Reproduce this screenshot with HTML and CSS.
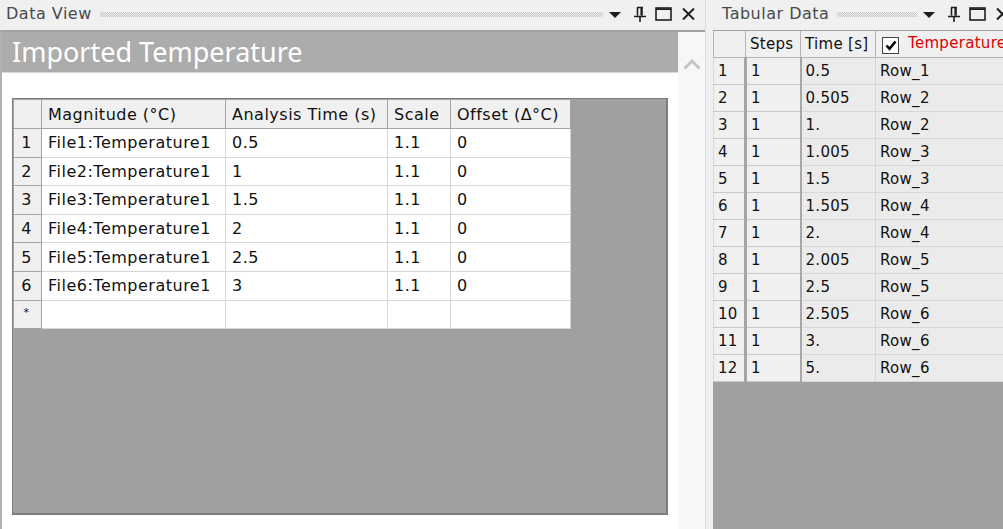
FILE: index.html
```html
<!DOCTYPE html>
<html lang="en">
<head>
    <meta charset="UTF-8">
    <title>Data View</title>
    <link rel="stylesheet" href="styles.css">
</head>
<body>

<div class="app">

    <!-- Data View pane -->
    <section class="pane pane-left">
        <header class="pane-title">
            <span class="pane-name">Data View</span>
            <span class="grip"></span>
            <span class="pane-tools">
                <svg class="ico ico-menu" width="12" height="6" viewBox="0 0 12 6"><path d="M0 0H12L6 6Z" fill="#1e1e1e"/></svg>
                <svg class="ico ico-pin" width="14" height="16" viewBox="0 0 14 16"><path d="M4.5 1.5V9.5M4 1.5H10M9 1.5V9.5M1 10.5H13M7 10.5V16" stroke="#1e1e1e" stroke-width="1.6" fill="none"/><path d="M8.2 1.5V9.5" stroke="#1e1e1e" stroke-width="1.6"/></svg>
                <svg class="ico ico-max" width="17" height="14" viewBox="0 0 17 14"><rect x="1" y="1" width="15" height="12" fill="none" stroke="#1e1e1e" stroke-width="1.6"/><path d="M1 2.2H16" stroke="#1e1e1e" stroke-width="1.6"/></svg>
                <svg class="ico ico-close" width="13" height="12" viewBox="0 0 13 12"><path d="M1 0.5L12 11.5M12 0.5L1 11.5" stroke="#1e1e1e" stroke-width="2"/></svg>
            </span>
        </header>
        <div class="pane-body">
            <div class="view">
                <div class="banner">Imported Temperature</div>
                <div class="view-area">
                    <div class="grid-box">
                        <table class="grid">
                            <colgroup>
                                <col style="width:28px">
                                <col style="width:184px">
                                <col style="width:162px">
                                <col style="width:63px">
                                <col style="width:120px">
                            </colgroup>
                            <tr class="head">
                                <th class="rh"></th>
                                <th>Magnitude (°C)</th>
                                <th>Analysis Time (s)</th>
                                <th>Scale</th>
                                <th>Offset (Δ°C)</th>
                            </tr>
                            <tr><td class="rh">1</td><td>File1:Temperature1</td><td>0.5</td><td>1.1</td><td>0</td></tr>
                            <tr><td class="rh">2</td><td>File2:Temperature1</td><td>1</td><td>1.1</td><td>0</td></tr>
                            <tr><td class="rh">3</td><td>File3:Temperature1</td><td>1.5</td><td>1.1</td><td>0</td></tr>
                            <tr><td class="rh">4</td><td>File4:Temperature1</td><td>2</td><td>1.1</td><td>0</td></tr>
                            <tr><td class="rh">5</td><td>File5:Temperature1</td><td>2.5</td><td>1.1</td><td>0</td></tr>
                            <tr><td class="rh">6</td><td>File6:Temperature1</td><td>3</td><td>1.1</td><td>0</td></tr>
                            <tr><td class="rh star">*</td><td></td><td></td><td></td><td></td></tr>
                        </table>
                    </div>
                </div>
            </div>
            <div class="vscroll">
                <svg width="18" height="12" viewBox="0 0 18 12"><path d="M1.5 10.5L9 3L16.5 10.5" stroke="#c4c4c4" stroke-width="3" fill="none"/></svg>
            </div>
        </div>
    </section>

    <div class="splitter"></div>

    <!-- Tabular Data pane -->
    <section class="pane pane-right">
        <header class="pane-title">
            <span class="pane-name">Tabular Data</span>
            <span class="grip"></span>
            <span class="pane-tools">
                <svg class="ico ico-menu" width="12" height="6" viewBox="0 0 12 6"><path d="M0 0H12L6 6Z" fill="#1e1e1e"/></svg>
                <svg class="ico ico-pin" width="14" height="16" viewBox="0 0 14 16"><path d="M4.5 1.5V9.5M4 1.5H10M9 1.5V9.5M1 10.5H13M7 10.5V16" stroke="#1e1e1e" stroke-width="1.6" fill="none"/><path d="M8.2 1.5V9.5" stroke="#1e1e1e" stroke-width="1.6"/></svg>
                <svg class="ico ico-max" width="17" height="14" viewBox="0 0 17 14"><rect x="1" y="1" width="15" height="12" fill="none" stroke="#1e1e1e" stroke-width="1.6"/><path d="M1 2.2H16" stroke="#1e1e1e" stroke-width="1.6"/></svg>
                <svg class="ico ico-close" width="13" height="12" viewBox="0 0 13 12"><path d="M1 0.5L12 11.5M12 0.5L1 11.5" stroke="#1e1e1e" stroke-width="2"/></svg>
            </span>
        </header>
        <div class="tab-body">
            <table class="tab">
                <colgroup>
                    <col style="width:32px">
                    <col style="width:55px">
                    <col style="width:75px">
                    <col style="width:144px">
                </colgroup>
                <tr class="head">
                    <th class="num"></th>
                    <th class="steps">Steps</th>
                    <th>Time [s]</th>
                    <th class="temp"><span class="check"><svg width="12" height="11" viewBox="0 0 12 11"><path d="M1.5 5.5L4.5 8.8L10.5 1.5" stroke="#000" stroke-width="2.6" fill="none"/></svg></span>Temperature</th>
                </tr>
                <tr><td class="num">1</td><td class="steps">1</td><td>0.5</td><td>Row_1</td></tr>
                <tr><td class="num">2</td><td class="steps">1</td><td>0.505</td><td>Row_2</td></tr>
                <tr><td class="num">3</td><td class="steps">1</td><td>1.</td><td>Row_2</td></tr>
                <tr><td class="num">4</td><td class="steps">1</td><td>1.005</td><td>Row_3</td></tr>
                <tr><td class="num">5</td><td class="steps">1</td><td>1.5</td><td>Row_3</td></tr>
                <tr><td class="num">6</td><td class="steps">1</td><td>1.505</td><td>Row_4</td></tr>
                <tr><td class="num">7</td><td class="steps">1</td><td>2.</td><td>Row_4</td></tr>
                <tr><td class="num">8</td><td class="steps">1</td><td>2.005</td><td>Row_5</td></tr>
                <tr><td class="num">9</td><td class="steps">1</td><td>2.5</td><td>Row_5</td></tr>
                <tr><td class="num">10</td><td class="steps">1</td><td>2.505</td><td>Row_6</td></tr>
                <tr><td class="num">11</td><td class="steps">1</td><td>3.</td><td>Row_6</td></tr>
                <tr><td class="num">12</td><td class="steps">1</td><td>5.</td><td>Row_6</td></tr>
            </table>
        </div>
    </section>

</div>

</body>
</html>
```

FILE: styles.css
```css
body {
    margin: 0;
    font-family: 'DejaVu Sans', 'Noto Sans', sans-serif;
    font-size: 16px;
    letter-spacing: 0.5px;
    color: #111;
    background: #f0f0f0;
    overflow: hidden;
}

.app {
    display: flex;
    width: 1003px;
    height: 529px;
    overflow: hidden;
}

.pane {
    display: flex;
    flex-direction: column;
    flex-shrink: 0;
}

.pane-left {
    width: 705px;
}

.pane-right {
    width: 306px;
}

.splitter {
    width: 7px;
    flex-shrink: 0;
    background: #f0f0f4;
    border-left: 1px solid #dcdcdc;
}

/* title bar */
.pane-title {
    height: 30px;
    display: flex;
    align-items: center;
    padding: 0 10px 3px 6px;
    box-sizing: border-box;
    background: #f0f0f0;
    flex-shrink: 0;
}

.pane-right .pane-title {
    padding-left: 9px;
}

.pane-name {
    color: #4a4a4a;
    font-size: 16px;
    line-height: 1;
    white-space: nowrap;
}

.grip {
    flex: 1;
    height: 5px;
    margin: 1px 6px 0 8px;
    background-image: conic-gradient(#c4c4c4 25%, transparent 0 50%, #c4c4c4 0 75%, transparent 0);
    background-size: 2px 2px;
}

.pane-tools {
    display: flex;
    align-items: center;
    margin-top: 1px;
}

.ico {
    display: block;
}

.ico-menu {
    margin-right: 12px;
    margin-top: 1px;
}

.ico-pin {
    margin-right: 8px;
}

.ico-max {
    margin-right: 10px;
}

/* data view body */
.pane-body {
    flex: 1;
    display: flex;
    border-top: 2px solid #a2a2a2;
    border-left: 2px solid #b0b0b0;
    min-height: 0;
}

.view {
    flex: 1;
    display: flex;
    flex-direction: column;
    background: #fff;
}

.banner {
    height: 40px;
    line-height: 40px;
    padding-left: 10px;
    background: #acacac;
    color: #fff;
    font-family: 'Noto Sans', sans-serif;
    font-size: 27px;
    letter-spacing: 0;
    border-bottom: 1px solid #d8d8d8;
}

.view-area {
    flex: 1;
    padding: 25px 10px 14px 10px;
    display: flex;
}

.grid-box {
    flex: 1;
    background: #a0a0a0;
    border: 1px solid #7c7c7c;
    border-right-width: 2px;
    border-bottom-width: 2px;
}

.vscroll {
    width: 27px;
    background: #f7f7f7;
    display: flex;
    justify-content: center;
    padding-top: 26px;
    box-sizing: border-box;
}

.vscroll svg {
    display: block;
}

/* grid */
.grid {
    width: 557px;
    border-collapse: collapse;
    table-layout: fixed;
    background: #fff;
}

.grid td, .grid th {
    height: 27.6px;
    padding: 0 6px;
    border: 1px solid #d6d6d6;
    font-weight: normal;
    text-align: left;
    white-space: nowrap;
    overflow: hidden;
}

.grid .head th {
    height: 28px;
    background: #f0f0f0;
    border-color: #a4a4a4;
}

.grid .rh {
    background: #f0f0f0;
    text-align: center;
    padding: 0 2px 0 0;
    border-color: #a4a4a4;
}

.grid .star {
    font-size: 11px;
    vertical-align: top;
    padding-top: 5px;
    box-sizing: border-box;
}

/* tabular data */
.tab-body {
    flex: 1;
    background: #a0a0a0;
    overflow: hidden;
    padding-top: 1px;
}

.tab {
    width: 306px;
    border-collapse: collapse;
    table-layout: fixed;
    font-size: 15px;
    letter-spacing: 0.3px;
}

.tab td, .tab th {
    height: 26px;
    padding: 0 4px;
    font-weight: normal;
    text-align: left;
    white-space: nowrap;
    overflow: hidden;
    background: #ebebeb;
    border: 1px solid #d8d8d8;
}

.tab .head th {
    background: #f0f0f0;
    border: 1px solid #b4b4b4;
    border-top: none;
}

.tab td.num, .tab td.steps {
    background: #f0f0f0;
    border-right: 2px solid #a8a8a8;
    border-bottom: 1px solid #c8c8c8;
}

.tab td.num {
    border-right: 3px double #a8a8a8;
    padding-left: 4px;
}

.tab .temp {
    color: #e00000;
    padding-left: 6px;
}

.check {
    display: inline-flex;
    align-items: center;
    justify-content: center;
    width: 15px;
    height: 15px;
    border: 1px solid #444;
    background: #fff;
    margin-right: 9px;
    vertical-align: -3px;
}

.check svg {
    display: block;
}
```
